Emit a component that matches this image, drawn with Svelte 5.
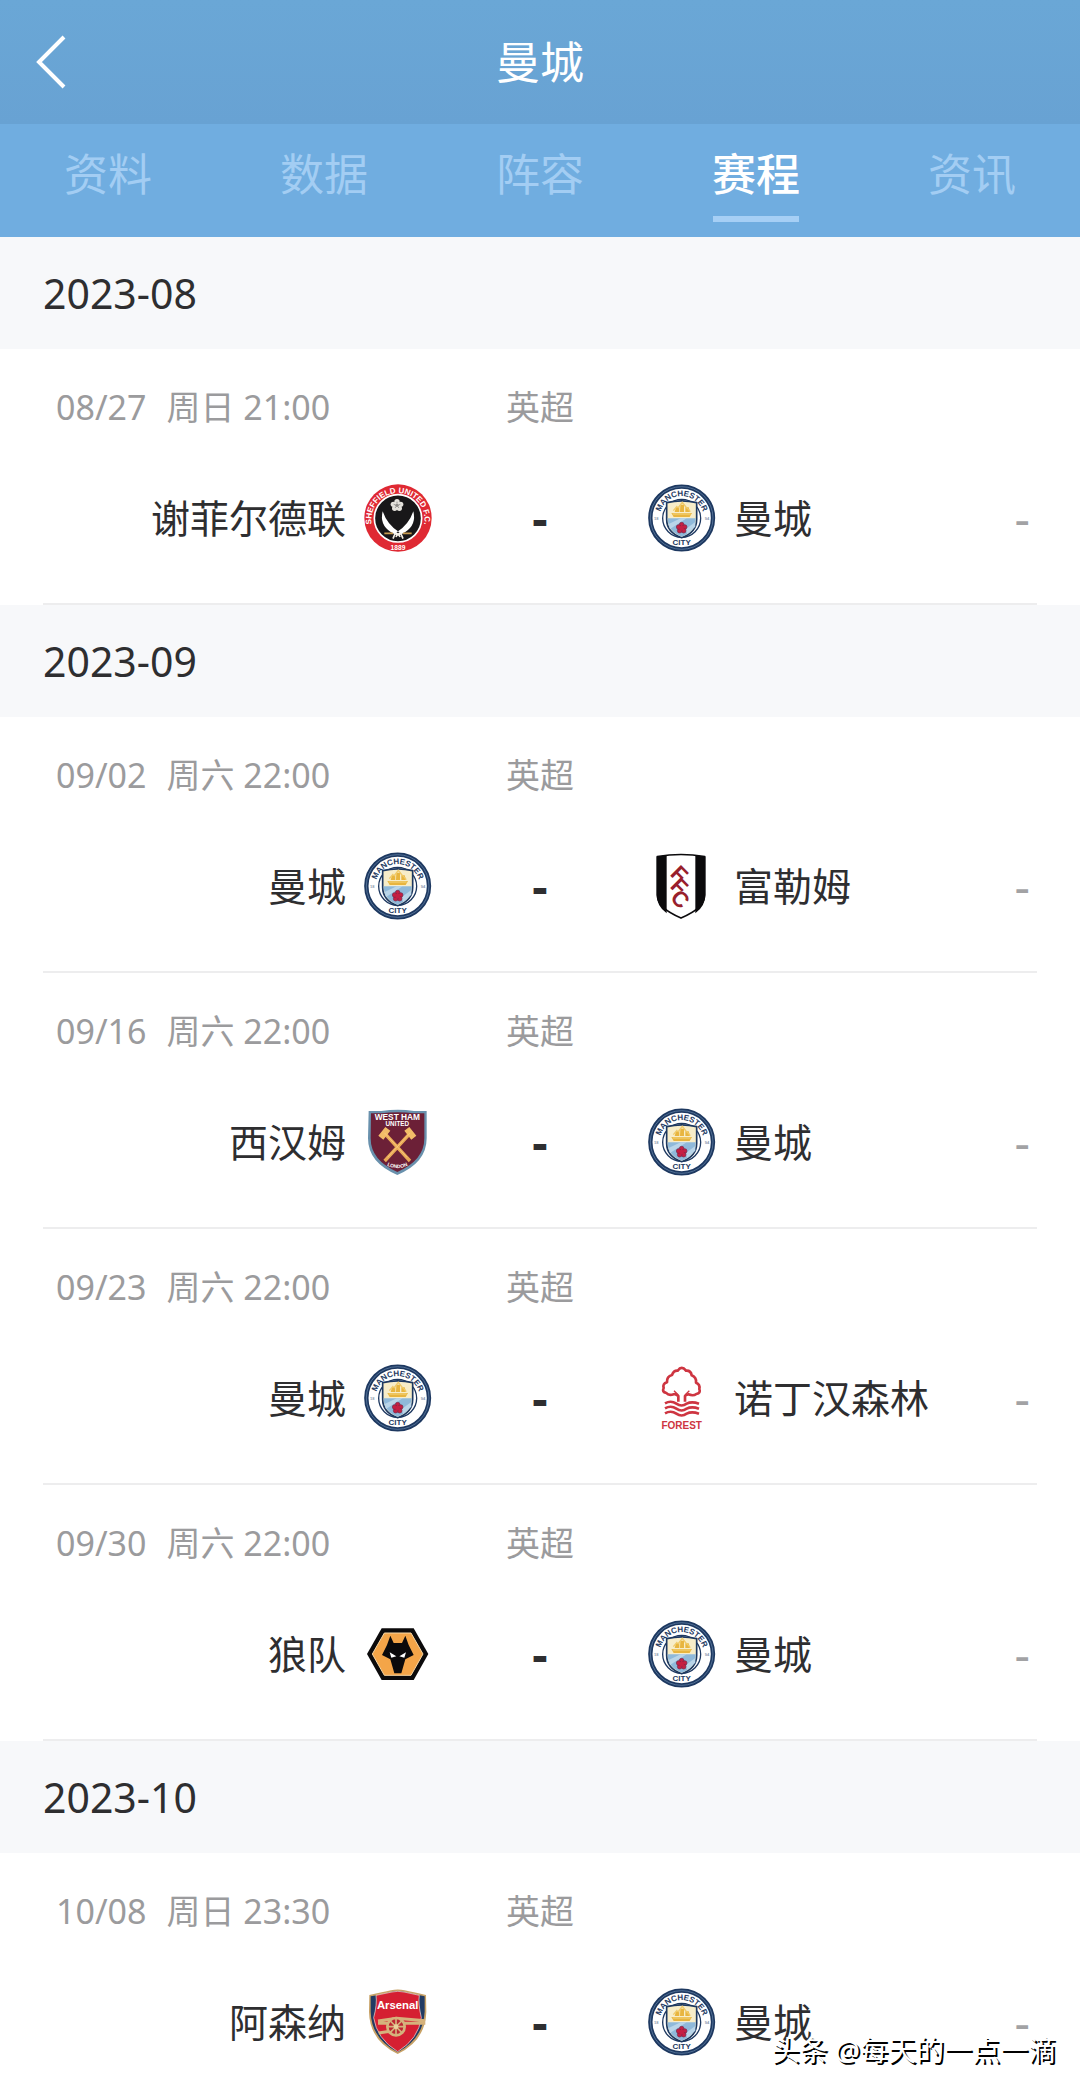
<script lang="ts">
  type Match = { date: string; day: string; time: string; home: string; away: string };

  const TABS = ['资料', '数据', '阵容', '赛程', '资讯'];
  let active = $state('赛程');

  const MONTHS: { month: string; matches: Match[] }[] = [
    {
      month: '2023-08',
      matches: [{ date: '08/27', day: '周日', time: '21:00', home: '谢菲尔德联', away: '曼城' }],
    },
    {
      month: '2023-09',
      matches: [
        { date: '09/02', day: '周六', time: '22:00', home: '曼城', away: '富勒姆' },
        { date: '09/16', day: '周六', time: '22:00', home: '西汉姆', away: '曼城' },
        { date: '09/23', day: '周六', time: '22:00', home: '曼城', away: '诺丁汉森林' },
        { date: '09/30', day: '周六', time: '22:00', home: '狼队', away: '曼城' },
      ],
    },
    {
      month: '2023-10',
      matches: [{ date: '10/08', day: '周日', time: '23:30', home: '阿森纳', away: '曼城' }],
    },
  ];
</script>

<!-- club crests, all drawn on a 204 x 204 grid -->
{#snippet crest(team: string)}
  <svg class="crest" viewBox="0 0 204 204" aria-hidden="true">
    {#if team === '曼城'}
      <circle cx="101" cy="102" r="94" fill="#fff" stroke="#1d3860" stroke-width="13" />
      <circle cx="101" cy="102" r="94" fill="none" stroke="#6d8db0" stroke-width="2" />
      <path id="city-top" d="M35 102a66 66 0 0 1 132 0" fill="none" />
      <text class="cityName" text-anchor="middle"><textPath href="#city-top" startOffset="50%">MANCHESTER</textPath></text>
      <circle cx="101" cy="103" r="57" fill="#fff" stroke="#1d3860" stroke-width="4" />
      <path d="M56 56q45-11 90 0v50q0 40-45 55q-45-15-45-55z" fill="#f7edc9" stroke="#1d3860" stroke-width="5" />
      <path d="M59 103h84q0 40-42 55q-42-15-42-55z" fill="#8fb9da" />
      <path d="M62 120l36-17h18l-50 32zM118 150l24-22v-14l-30 22z" fill="#b9d5e9" />
      <path d="M70 87h62l-7 12H77zM84 70h10v14H80zM97 62h11v22H96zM112 70h10l4 14h-14z" fill="#e8b53f" />
      <path d="M76 80l12-14M90 72l13-17 13 17M116 70l11 13M74 90h54" fill="none" stroke="#f0ca69" stroke-width="4" />
      <g fill="#c51f43" stroke="#742849" stroke-width="2">
        <circle cx="101" cy="122" r="7" /><circle cx="110" cy="129" r="7" /><circle cx="107" cy="140" r="7" />
        <circle cx="95" cy="140" r="7" /><circle cx="92" cy="129" r="7" />
      </g>
      <circle cx="101" cy="132" r="7" fill="#c51f43" />
      <text x="101" y="184" class="cityName" text-anchor="middle">CITY</text>
      <text x="25" y="107" class="cityYear" text-anchor="middle">18</text>
      <text x="177" y="107" class="cityYear" text-anchor="middle">94</text>
    {:else if team === '谢菲尔德联'}
      <circle cx="102" cy="102" r="101" fill="#df2933" />
      <circle cx="102" cy="103" r="71" fill="#181719" stroke="#fff" stroke-width="5" />
      <path id="blades-top" d="M30 142a80 80 0 1 1 144 0" fill="none" />
      <text class="bladesName" text-anchor="middle"><textPath href="#blades-top" startOffset="50%">SHEFFIELD UNITED F.C.</textPath></text>
      <text x="102" y="197" class="bladesYear" text-anchor="middle">1889</text>
      <g fill="#e4e2dc">
        <circle cx="99" cy="53" r="8" /><circle cx="88" cy="61" r="8" /><circle cx="92" cy="73" r="8" />
        <circle cx="106" cy="73" r="8" /><circle cx="110" cy="61" r="8" /><circle cx="99" cy="64" r="10" />
      </g>
      <path d="M99 53v6M89 61l6 2M93 72l4-5M105 72l-4-5M109 61l-6 2" stroke="#777" stroke-width="2" />
      <circle cx="99" cy="64" r="5" fill="#8d8b88" />
      <path d="M56 82q-10 40 24 62l22 13 4-12q-36-22-50-63zM148 82q10 40-24 62l-22 13-4-12q36-22 50-63z" fill="#fff" />
      <path d="M61 148h26M117 148h26" stroke="#c79b50" stroke-width="5" />
      <path d="M94 147l-7 17M110 147l7 17M102 147l-6 12M102 147l6 12" stroke="#f3eee3" stroke-width="5" />
    {:else if team === '富勒姆'}
      <path d="M26 14q73-13 146 0v115q0 40-73 72q-73-32-73-72z" fill="#fff" />
      <path d="M26 14l30-5v175q-30-22-30-55zM142 9l30 5v115q0 33-30 55z" fill="#0b0a0c" />
      <path d="M28 14q71-13 142 0v115q0 39-71 69q-71-30-71-69z" fill="none" stroke="#0b0a0c" stroke-width="5" />
      <g class="fulham">
        <text transform="translate(64 68) rotate(45)">F</text>
        <text transform="translate(64 105) rotate(45)">F</text>
        <text transform="translate(64 140) rotate(45)">C</text>
      </g>
    {:else if team === '西汉姆'}
      <path d="M14 9h38q50-7 98 0h38v82q0 73-88 110Q12 164 12 91z" fill="#6991ad" />
      <path d="M21 16h32q48-7 96 0h32v75q0 66-81 101Q20 157 20 91z" fill="#6c2037" />
      <text x="100" y="36" class="hamName" text-anchor="middle">WEST HAM</text>
      <text x="100" y="54" class="hamSub" text-anchor="middle">UNITED</text>
      <path d="M61 75l77 84M139 75l-77 84" stroke="#e9a957" stroke-width="10" />
      <path d="M43 83l21-26 15 11-21 27zM157 83l-21-26-15 11 21 27z" fill="#f2bc68" />
      <path d="M62 75l67 73M138 75l-67 73" stroke="#ffd58a" stroke-width="2" />
      <path id="ham-bottom" d="M66 171q34 19 68 0" fill="none" />
      <text class="hamCity" text-anchor="middle"><textPath href="#ham-bottom" startOffset="50%">LONDON</textPath></text>
    {:else if team === '诺丁汉森林'}
      <g fill="none" stroke="#ce3541" stroke-width="8" stroke-linejoin="round">
        <path d="M91 113V96q-9-8-14-5q-15 5-22-4q-14-3-8-15q-4-13 10-17q-1-18 15-22q5-14 17-13q12-17 25 0q15-1 17 14q15 6 13 22q13 5 10 19q5 12-9 15q-9 7-24 1q-4 0-10 5v17" />
        <path d="M91 93l-13-13M111 93l13-13" stroke-width="4" />
        <path d="M51 118q18-10 34 1t31 0q15-8 37 0M51 133q18-10 34 1t31 0q15-8 37 0M51 148q18-10 34 1t31 0q15-8 37 0" />
      </g>
      <text x="101" y="195" class="forestName" text-anchor="middle">FOREST</text>
    {:else if team === '狼队'}
      <path d="M53 25h96l44 77-44 78H53L9 102z" fill="#0b0a0b" />
      <path d="M61 39h80l36 63-36 64H61l-36-64z" fill="#f4a548" stroke="#f8d7a4" stroke-width="3" />
      <path d="M79 47l10 22h25l10-22 10 28 15 30-25 13-12 42H91l-12-42-25-13 15-30z" fill="#0b0a0b" />
      <path d="M77 97l20 12-15 4zM126 97l-20 12 15 4z" fill="#fff" />
    {:else if team === '阿森纳'}
      <path d="M16 21q42-9 65-14q20-5 41 0q24 5 64 14l1 51q-3 86-86 126Q17 158 15 72z" fill="#c8a266" />
      <path d="M20 25q42-8 64-14q17-4 36 0q21 5 62 14v46q-4 81-81 122Q22 152 20 71z" fill="#223b63" />
      <path d="M36 22l48-10q17-4 36 0l46 10q-4 25 6 67q-8 63-71 102Q38 152 29 89q11-41 7-67z" fill="#d51f32" stroke="#f2e5dc" stroke-width="2" />
      <text x="101" y="64" class="arsenalName" text-anchor="middle">Arsenal</text>
      <g fill="none" stroke="#d5b27c">
        <path d="M42 99l56-8 86 7M42 106h142M44 135l44-7" stroke-width="9" />
        <circle cx="96" cy="116" r="26" fill="#bd2733" stroke-width="8" />
        <path d="M96 92v48M72 116h48M79 99l34 34M113 99l-34 34" stroke-width="5" />
      </g>
      <circle cx="96" cy="116" r="7" fill="#ead19e" />
    {/if}
  </svg>
{/snippet}

<div class="page">
  <header class="header">
    <button class="back" aria-label="返回">
      <svg viewBox="0 0 32 56" aria-hidden="true">
        <path d="M29 3L4 28l25 25" fill="none" stroke="currentColor" stroke-width="4" />
      </svg>
    </button>
    <h1 class="title">曼城</h1>
  </header>

  <nav class="tabs">
    {#each TABS as tab}
      <button class="tab" class:active={tab === active} onclick={() => (active = tab)}>{tab}</button>
    {/each}
  </nav>

  <main class="list">
    {#each MONTHS as group}
      <section>
        <h2 class="month">{group.month}</h2>
        {#each group.matches as match}
          <article class="match">
            <div class="meta">
              <time class="when"><span>{match.date}</span><span>{match.day} {match.time}</span></time>
              <span class="league">英超</span>
            </div>
            <div class="teams">
              <div class="home">
                <span>{match.home}</span>
                {@render crest(match.home)}
              </div>
              <span class="score">-</span>
              <div class="away">
                {@render crest(match.away)}
                <span>{match.away}</span>
                <span class="extra">-</span>
              </div>
            </div>
          </article>
        {/each}
      </section>
    {/each}
  </main>

  <div class="credit">头条 @每天的一点一滴</div>
</div>

<style>
  :global(body) { background: #fff; }

  .page {
    position: relative;
    display: flex;
    flex-direction: column;
    height: 100vh;
    overflow: hidden;
    color: #2e2e30;
    font-family: 'Noto Sans', 'Noto Sans CJK SC', sans-serif;
  }

  .header {
    display: grid;
    grid-template-columns: 1fr auto 1fr;
    align-items: center;
    flex: none;
    height: 124px;
    padding: 0 35px;
    background: linear-gradient(#6aa7d6, #68a2d3);
    color: #fff;
  }
  .back { justify-self: start; display: flex; padding: 0; border: 0; background: none; color: #fff; cursor: pointer; }
  .back svg { width: 32px; height: 56px; }
  .title { margin: 0; font-size: 44px; line-height: 64px; font-weight: 400; }

  .tabs { display: grid; grid-template-columns: repeat(5, 1fr); flex: none; height: 113px; background: #70ade0; }
  .tab {
    position: relative;
    padding: 0 0 18px;
    border: 0;
    background: none;
    color: #a3cdf3;
    font: inherit;
    font-size: 44px;
    cursor: pointer;
  }
  .tab.active { color: #fff; font-weight: 500; }
  .tab.active::after {
    content: '';
    position: absolute;
    left: 50%;
    bottom: 15px;
    width: 86px;
    height: 6px;
    margin-left: -43px;
    background: #a6cff5;
  }

  .list { flex: 1; overflow-y: auto; scrollbar-width: none; }
  .month { margin: 0; padding: 0 43px; background: #f7f8fa; font-size: 41px; line-height: 112px; font-weight: 400; }

  .match { position: relative; height: 256px; padding-top: 33px; box-sizing: border-box; }
  .match::after { content: ''; position: absolute; left: 43px; right: 43px; bottom: 0; height: 2px; background: #ededee; }

  .meta { display: grid; grid-template-columns: 2fr 1fr 2fr; color: #9b9b9d; font-size: 34px; line-height: 50px; }
  .when { display: flex; gap: 20px; padding-left: 56px; }
  .league { text-align: center; }

  .teams { display: grid; grid-template-columns: 2fr 1fr 2fr; align-items: center; margin-top: 52px; font-size: 39px; line-height: 68px; }
  .home, .away { display: flex; align-items: center; gap: 18px; }
  .home { justify-content: flex-end; }
  .score { text-align: center; font-size: 48px; font-weight: 700; }
  .extra { margin-left: auto; padding-right: 50px; color: #a2a2a4; font-size: 48px; }

  .crest { flex: none; width: 68px; height: 68px; font-family: 'Liberation Sans', sans-serif; font-weight: 700; }
  .cityName { font-size: 24px; fill: #1d3860; }
  .cityYear { font-size: 12px; fill: #8c9bb0; }
  .bladesName { font-size: 24px; fill: #fff; }
  .bladesYear { font-size: 20px; fill: #fff; }
  .fulham { font-size: 66px; fill: #98202c; }
  .hamName { font-size: 25px; fill: #fff; }
  .hamSub { font-size: 19px; fill: #fff; }
  .hamCity { font-size: 15px; fill: #fff; }
  .forestName { font-family: 'Liberation Sans Narrow', 'Liberation Sans', sans-serif; font-size: 30px; fill: #ce3541; }
  .arsenalName { font-size: 34px; fill: #fff; }

  .credit {
    position: absolute;
    right: 24px;
    bottom: 18px;
    color: #fff;
    font-size: 28px;
    line-height: 40px;
    text-shadow: 2px 2px 0 #000;
  }
</style>
